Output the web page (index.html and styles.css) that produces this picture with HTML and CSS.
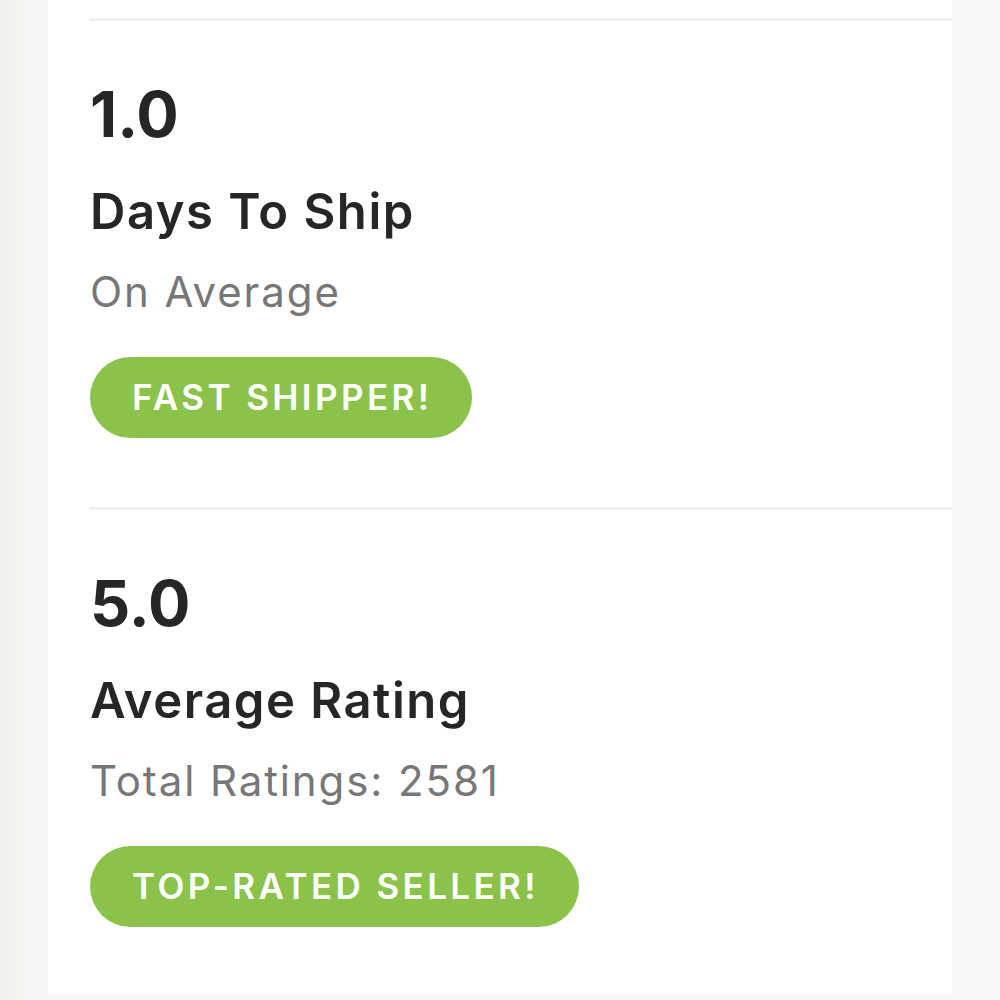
FILE: index.html
```html
<!DOCTYPE html>
<html>
<head>
<meta charset="utf-8">
<link rel="stylesheet" href="styles.css">
</head>
<body>
<div class="page">
  <div class="card">
    <section class="stat">
      <div class="value">1.0</div>
      <div class="label">Days To Ship</div>
      <div class="sub">On Average</div>
      <span class="badge">FAST SHIPPER!</span>
    </section>
    <section class="stat">
      <div class="value">5.0</div>
      <div class="label">Average Rating</div>
      <div class="sub">Total Ratings: 2581</div>
      <span class="badge">TOP-RATED SELLER!</span>
    </section>
  </div>
</div>
</body>
</html>
```

FILE: styles.css
```css
html, body {
  margin: 0;
  padding: 0;
}
body {
  background: #f4f5f2;
  font-family: "Inter", "Lato", sans-serif;
}
.page {
  width: 1000px;
  height: 1000px;
  overflow: hidden;
  background: linear-gradient(to right, #eef0ec 0px, #f6f7f4 30px, #f7f7f5 48px);
}
.card {
  margin-left: 48px;
  width: 904px;
  background: #ffffff;
  padding-top: 18px;
}
.stat {
  border-top: 3px solid #f0eeee;
  margin-left: 42px;
  padding: 61px 0 69px 0;
  display: flex;
  flex-direction: column;
  align-items: flex-start;
}
.stat + .stat {
  padding-bottom: 68px;
}
.value {
  font-size: 63px;
  line-height: 64px;
  font-weight: 700;
  color: #262626;
}
.label {
  margin-top: 36px;
  font-size: 49px;
  line-height: 60px;
  font-weight: 600;
  letter-spacing: 1.5px;
  color: #262626;
}
.sub {
  margin-top: 24px;
  font-size: 42px;
  line-height: 52px;
  font-weight: 400;
  letter-spacing: 1.9px;
  color: #777777;
}
.badge {
  margin-top: 39px;
  height: 81px;
  line-height: 81px;
  padding: 0 40px 0 42px;
  border-radius: 41px;
  background: #8bc34a;
  color: #ffffff;
  font-size: 35px;
  font-weight: 600;
  letter-spacing: 3.4px;
}
```
